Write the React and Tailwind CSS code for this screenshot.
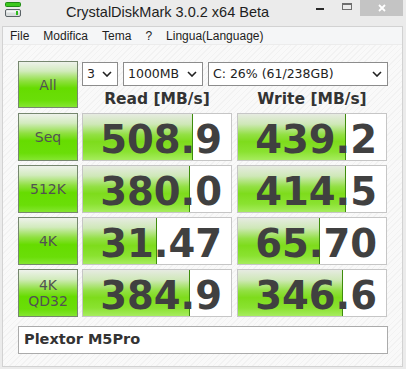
import React from "react";

const rows = [
  { label: ["Seq"], read: "508.9", readBar: 110, write: "439.2", writeBar: 108 },
  { label: ["512K"], read: "380.0", readBar: 107, write: "414.5", writeBar: 108 },
  { label: ["4K"], read: "31.47", readBar: 74, write: "65.70", writeBar: 82 },
  { label: ["4K", "QD32"], read: "384.9", readBar: 107, write: "346.6", writeBar: 105 },
];

function Chevron() {
  return (
    <svg width="10" height="6" viewBox="0 0 10 6" className="shrink-0">
      <path d="M1 1 L5 5 L9 1" fill="none" stroke="#222" strokeWidth="1.6" />
    </svg>
  );
}

function SelectBox({ width, text }) {
  return (
    <div
      className={`flex h-[24px] items-center justify-between border border-[#8c8c8c] bg-white pl-[4px] pr-[5px] font-['DejaVu_Sans',sans-serif] text-[12.5px] text-[#222] ${width}`}
    >
      <span>{text}</span>
      <Chevron />
    </div>
  );
}

function GreenButton({ lines, tall }) {
  return (
    <div
      className={`flex w-[60px] shrink-0 flex-col items-center justify-center border border-[#76876f] bg-[linear-gradient(to_bottom,#eef2eb_0%,#d2ebbd_20%,#8fe040_42%,#66dc00_58%,#6ade08_85%,#84e630_100%)] font-['DejaVu_Sans',sans-serif] text-[14px] leading-[16px] text-[#525252] ${tall ? "h-[47px]" : "h-[48px]"}`}
    >
      {lines.map((l) => (
        <span key={l}>{l}</span>
      ))}
    </div>
  );
}

function Cell({ value, bar }) {
  return (
    <div className="relative h-[48px] w-[150px] shrink-0 overflow-hidden border border-[#c6c6c6] bg-white">
      <div
        className="absolute bottom-0 left-0 top-0 border-r border-[#3e8c0c] bg-[linear-gradient(to_bottom,#e6ebe1_0%,#cfe8b8_22%,#92e043_45%,#7edc1c_60%,#8ae230_82%,#a6ec5e_100%)]"
        style={{ width: bar }}
      />
      <div className="relative pr-[9px] pt-[7px] text-right font-['DejaVu_Sans',sans-serif] text-[38.5px] font-bold leading-none text-[#404040]">
        {value}
      </div>
    </div>
  );
}

export default function App() {
  return (
    <div className="flex h-[369px] w-[406px] flex-col overflow-hidden bg-[#ebebeb] font-['Liberation_Sans',Arial,sans-serif]">
      {/* title bar */}
      <div className="flex h-[26px] shrink-0 items-start">
        <svg width="17" height="16" viewBox="0 0 17 16" className="ml-[5px] mt-[2px] shrink-0">
          <rect x="0.5" y="0.5" width="15" height="4" rx="1" fill="#3cc81e" stroke="#1f8a14" />
          <rect x="0.5" y="7.5" width="15" height="7" rx="1.5" fill="#d8dcdc" stroke="#5a6266" />
          <rect x="1.5" y="8.5" width="13" height="2" fill="#f4f6f6" />
          <rect x="11" y="9" width="2" height="4" fill="#2dbb1c" />
        </svg>
        <span className="ml-[44px] mt-[3px] text-[14.5px] leading-[18px] text-[#1e1e1e]">
          CrystalDiskMark 3.0.2 x64 Beta
        </span>
        <div className="ml-auto flex h-[16px] items-start">
          <div className="mr-[18px] mt-[8px] h-[2px] w-[8px] bg-[#2a2a2a]" />
          <div className="mr-[8px] mt-[3px] h-[7px] w-[10px] border border-t-2 border-[#6e6e6e]" />
          <div className="mr-[3px] flex h-[16px] w-[43px] items-center justify-center bg-[#c4c4c4]">
            <svg width="8" height="8" viewBox="0 0 8 8">
              <path d="M1 1 L7 7 M7 1 L1 7" stroke="#fff" strokeWidth="1.8" />
            </svg>
          </div>
        </div>
      </div>

      {/* client frame */}
      <div className="mb-[2px] ml-[2px] mr-[3px] flex flex-1 flex-col border border-[#d2d2d2]">
        {/* menu bar */}
        <div className="flex h-[18px] shrink-0 items-center gap-[14px] border-b border-[#ececec] bg-[#f5f6f7] pl-[7px] text-[12px] text-[#1e1e1e]">
          <span>File</span>
          <span>Modifica</span>
          <span>Tema</span>
          <span>?</span>
          <span>Lingua(Language)</span>
        </div>

        {/* main area */}
        <div className="flex flex-1 flex-col bg-[repeating-linear-gradient(135deg,#f9f9f9_0px,#f9f9f9_3px,#f2f2f2_3px,#f2f2f2_4px)] pl-[15px] pt-[16px]">
          <div className="flex gap-[4px]">
            <GreenButton lines={["All"]} tall />
            <div className="flex flex-col">
              <div className="mt-[1px] flex gap-[5px]">
                <SelectBox width="w-[36px]" text="3" />
                <SelectBox width="w-[80px]" text="1000MB" />
                <SelectBox width="w-[180px]" text="C: 26% (61/238GB)" />
              </div>
              <div className="flex h-[22px] gap-[5px] pt-[6px] font-['DejaVu_Sans',sans-serif] text-[15.5px] font-bold leading-none text-[#333]">
                <div className="w-[150px] text-center">Read [MB/s]</div>
                <div className="w-[150px] text-center">Write [MB/s]</div>
              </div>
            </div>
          </div>

          <div className="mt-[5px] flex flex-col gap-[4px]">
            {rows.map((r) => (
              <div key={r.label.join("")} className="flex">
                <GreenButton lines={r.label} />
                <div className="ml-[4px]">
                  <Cell value={r.read} bar={r.readBar} />
                </div>
                <div className="ml-[5px]">
                  <Cell value={r.write} bar={r.writeBar} />
                </div>
              </div>
            ))}
          </div>

          <div className="mt-[9px] flex h-[28px] w-[370px] items-center border border-[#ababab] bg-white pl-[5px] font-['DejaVu_Sans',sans-serif] text-[14.5px] font-bold text-[#333]">
            Plextor M5Pro
          </div>
        </div>
      </div>
    </div>
  );
}
